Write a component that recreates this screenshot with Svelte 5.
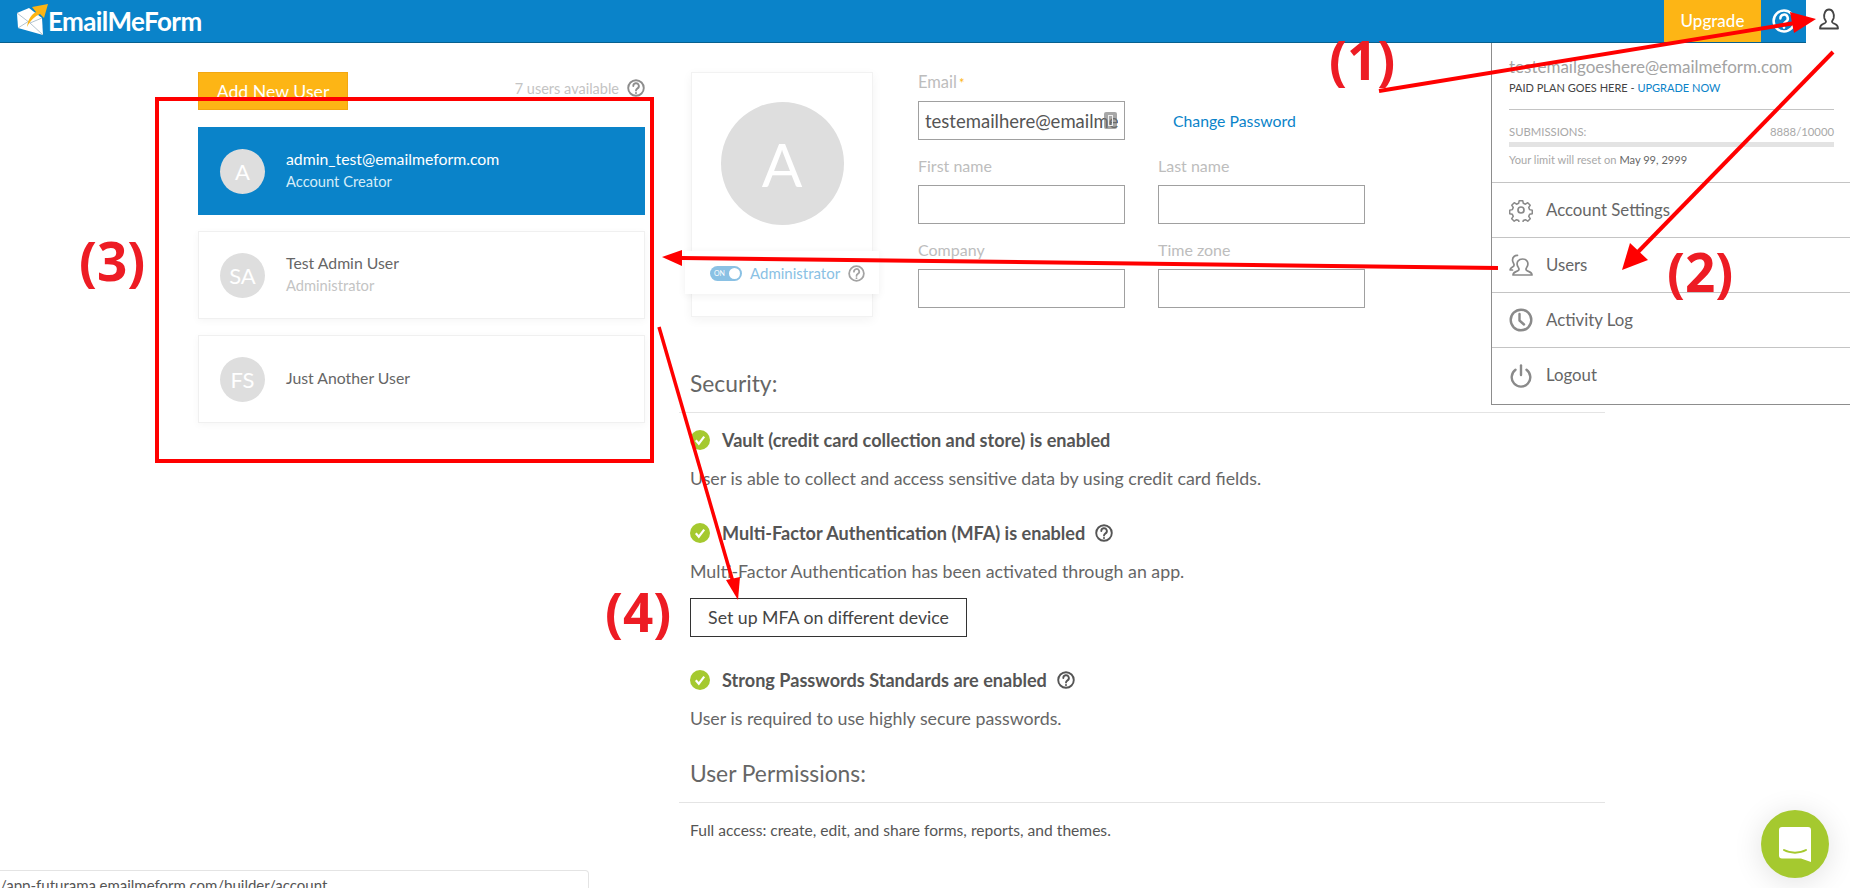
<script lang="ts">
  const users = [
    { initials: 'A', name: 'admin_test@emailmeform.com', role: 'Account Creator', active: true },
    { initials: 'SA', name: 'Test Admin User', role: 'Administrator', active: false },
    { initials: 'FS', name: 'Just Another User', role: '', active: false }
  ];

  const security = [
    { title: 'Vault (credit card collection and store) is enabled', text: 'User is able to collect and access sensitive data by using credit card fields.', help: false, button: false },
    { title: 'Multi-Factor Authentication (MFA) is enabled', text: 'Multi-Factor Authentication has been activated through an app.', help: true, button: true },
    { title: 'Strong Passwords Standards are enabled', text: 'User is required to use highly secure passwords.', help: true, button: false }
  ];

  const menu = ['Account Settings', 'Users', 'Activity Log', 'Logout'];
</script>

{#snippet helpIcon(size: number, color: string)}
  <svg class="help" width={size} height={size} viewBox="0 0 24 24" fill="none" stroke={color} stroke-width="2.500">
    <circle cx="12" cy="12" r="10.400" />
    <path d="M8.400 9.400a3.700 3.700 0 1 1 5.600 3.100c-1.200.8-2 1.400-2 2.900" stroke-linecap="round" />
    <circle cx="12" cy="18.600" r="1.300" fill={color} stroke="none" />
  </svg>
{/snippet}

{#snippet menuIcon(name: string)}
  <svg width="24" height="24" viewBox="0 0 24 24" fill="none" stroke="#8a8a8a" stroke-width="1.700" stroke-linecap="round" stroke-linejoin="round">
    {#if name === 'Account Settings'}
      <circle cx="12" cy="12" r="3" />
      <path d="M10 1.500h4l.6 3 2.400 1 2.600-1.700 2.800 2.800-1.700 2.600 1 2.400 3 .6v4l-3 .6-1 2.400 1.700 2.600-2.800 2.800-2.600-1.700-2.400 1-.6 3h-4l-.6-3-2.400-1-2.600 1.700-2.800-2.800 1.700-2.600-1-2.400-3-.6v-4l3-.6 1-2.400-1.700-2.600 2.800-2.800 2.600 1.700 2.400-1z" transform="translate(1.300 1.300) scale(.89)" />
    {:else if name === 'Users'}
      <path d="M9 16.500c-.3-1.400-1.300-2.200-1.700-3.700-.8-3 1-6.300 5.200-6.300s6 3.300 5.200 6.300c-.4 1.500-1.400 2.300-1.700 3.700-.2 1.200 1.200 1.900 3 2.600 2 .8 3 1.600 3 3.400H3c0-1.800 1-2.600 3-3.400 1.800-.7 3.200-1.400 3-2.600z" transform="translate(1 -.5)" />
      <path d="M8.500 2.400C6 2.200 3.500 4 3.500 7c0 2.200 1.300 3.200 1.600 5 .1 1-1 1.800-2.300 2.500-.9.500-1.500 1.200-1.700 2.500h2.400" />
    {:else if name === 'Activity Log'}
      <circle cx="12" cy="12" r="10.300" stroke-width="2.400" />
      <path d="M10.500 6v6.500l4.500 4" stroke-width="2.400" />
    {:else}
      <path d="M12 1.500V11" stroke-width="2.400" />
      <path d="M6.500 5.800a9.300 9.300 0 1 0 11 0" stroke-width="2.400" />
    {/if}
  </svg>
{/snippet}

<header class="topbar">
  <div class="logo">
    <svg width="34" height="34" viewBox="0 0 34 34">
      <path d="M2 9 14 4l13 10 1 17-25-7z" fill="#fff" />
      <path d="M2 9l13 10 13 12M3 24l11-7M27 14l-12 5" fill="none" stroke="#9fb4c2" stroke-width=".8" />
      <path d="M12 23C13 15 17 10 21 8l-4-5L33 0l-4 14-4-4c-5 2-10 7-13 13z" fill="#fdb515" />
    </svg>
    <span>EmailMeForm</span>
  </div>
  <div class="upgrade">Upgrade</div>
  <div class="top-help">{@render helpIcon(24, '#fff')}</div>
</header>

<button class="user-toggle" aria-label="Account">
  <svg width="20" height="22" viewBox="0 0 20 22" fill="none" stroke="#444" stroke-width="1.800" stroke-linejoin="round">
    <path d="M7 13.500c-.3-1.200-1.300-2-1.700-3.500C4.500 6 6.300 1.500 10 1.500S15.500 6 14.700 10c-.4 1.500-1.400 2.300-1.700 3.500-.2 1.300 1.200 1.800 3 2.500 2 .8 3 1.500 3 4.500H1c0-3 1-3.700 3-4.500 1.800-.7 3.200-1.200 3-2.500z" />
  </svg>
</button>

<main class="page">
  <section class="users">
    <div class="users-head">
      <button class="add-user">Add New User</button>
      <div class="available">7 users available {@render helpIcon(18, '#8d8d8d')}</div>
    </div>
    {#each users as user}
      <div class="user-card" class:active={user.active}>
        <div class="avatar">{user.initials}</div>
        <div class="user-text">
          <div class="user-name">{user.name}</div>
          {#if user.role}<div class="user-role">{user.role}</div>{/if}
        </div>
      </div>
    {/each}
  </section>

  <section class="detail">
    <div class="profile">
      <div class="profile-card">
        <div class="big-avatar">A</div>
        <div class="role-strip">
          <span class="switch"><span class="on">ON</span><span class="knob"></span></span>
          <span class="role-label">Administrator</span>
          {@render helpIcon(17, '#a3a3a3')}
        </div>
      </div>
      <div class="form">
        <div class="field">
          <label class="email-label" for="email">Email<em>*</em></label>
          <div class="email-wrap">
            <input id="email" value="testemailhere@emailmeform.com" readonly />
            <span class="key-icon"><i></i></span>
          </div>
        </div>
        <a class="change-pass" href="#top">Change Password</a>
        <div class="field"><label for="first">First name</label><input id="first" /></div>
        <div class="field"><label for="last">Last name</label><input id="last" /></div>
        <div class="field"><label for="company">Company</label><input id="company" /></div>
        <div class="field"><label for="zone">Time zone</label><input id="zone" /></div>
      </div>
    </div>

    <h2 class="section-title">Security:</h2>
    <div class="rule"></div>
    {#each security as item}
      <div class="sec-item">
        <h3>
          <svg width="20" height="20" viewBox="0 0 20 20">
            <circle cx="10" cy="10" r="10" fill="#a5c92f" />
            <path d="M5.800 10.300l3 3.400 5.400-7" fill="none" stroke="#fff" stroke-width="2.200" />
          </svg>
          <span>{item.title}</span>
          {#if item.help}{@render helpIcon(18, '#555')}{/if}
        </h3>
        <p>{item.text}</p>
        {#if item.button}<button class="mfa">Set up MFA on different device</button>{/if}
      </div>
    {/each}

    <h2 class="section-title perms">User Permissions:</h2>
    <div class="rule"></div>
    <p class="access">Full access: create, edit, and share forms, reports, and themes.</p>
  </section>
</main>

<aside class="account-menu">
  <div class="account-info">
    <div class="account-email">testemailgoeshere@emailmeform.com</div>
    <div class="plan">PAID PLAN GOES HERE - <a href="#top">UPGRADE NOW</a></div>
    <div class="subs"><span>SUBMISSIONS:</span><span>8888/10000</span></div>
    <div class="bar"><div class="bar-fill"></div></div>
    <div class="reset">Your limit will reset on <b>May 99, 2999</b></div>
  </div>
  {#each menu as item}
    <div class="menu-row">{@render menuIcon(item)}<span>{item}</span></div>
  {/each}
</aside>

<div class="url-tip">/app-futurama.emailmeform.com/builder/account</div>

<button class="chat" aria-label="Chat">
  <svg width="32" height="36" viewBox="0 0 32 36">
    <path d="M3 0h26a3 3 0 0 1 3 3v32l-10-3.500H3a3 3 0 0 1-3-3V3a3 3 0 0 1 3-3z" fill="#fff" />
    <path d="M5 23c6 3.500 16 3.500 22 0" fill="none" stroke="#a5c92f" stroke-width="2" stroke-linecap="round" />
  </svg>
</button>

<!-- red annotations drawn on top of the screenshot -->
<svg class="marks" width="1850" height="888" viewBox="0 0 1850 888" fill="none">
  <rect x="157" y="99" width="495" height="362" stroke="#f00" stroke-width="4" />
  <g stroke="#f00" stroke-width="4">
    <path d="M1379 91 1795 23" />
    <path d="M1833 52 1636 254" />
    <path d="M1498 268 682 258" />
  </g>
  <path d="M659 327 733 582" stroke="#f00" stroke-width="3.500" />
  <g fill="#f00">
    <path d="M1816 19 1790 12 1794 33z" />
    <path d="M1622 270 1630 243 1648 260z" />
    <path d="M662 257 682 250 682 266z" />
    <path d="M738 600 726 580 740 577z" />
  </g>
</svg>
<span class="mark-label one">(1)</span>
<span class="mark-label two">(2)</span>
<span class="mark-label three">(3)</span>
<span class="mark-label four">(4)</span>

<style>
  :global(body) {
    margin: 0;
    height: 888px;
    overflow: hidden;
    background: #fff;
    font-family: 'Lato', 'Liberation Sans', sans-serif;
    color: #555;
  }

  button {
    font-family: inherit;
    cursor: pointer;
  }

  .help {
    display: block;
    flex: none;
  }

  .topbar {
    display: flex;
    align-items: stretch;
    width: 1806px;
    height: 42px;
    background: #0a83c9;
    border-bottom: 1px solid #07608f;
  }

  .logo {
    display: flex;
    align-items: center;
    margin-left: 15px;
    color: #fff;
    font-size: 26px;
    font-weight: 700;
    letter-spacing: -0.6px;
    flex: 1;
  }

  .logo svg {
    margin-right: -1px;
    overflow: visible;
  }

  .upgrade {
    width: 97px;
    padding-bottom: 2px;
    box-sizing: border-box;
    background: #fdb515;
    color: #fff;
    font-size: 17px;
    font-weight: 500;
    display: flex;
    align-items: center;
    justify-content: center;
  }

  .top-help {
    width: 45px;
    display: flex;
    align-items: center;
    justify-content: center;
  }

  .user-toggle {
    position: absolute;
    top: 8px;
    left: 1819px;
    padding: 0;
    border: 0;
    background: none;
  }

  .page {
    display: flex;
    padding: 29px 0 0 198px;
    gap: 45px;
  }

  .users {
    width: 447px;
  }

  .users-head {
    display: flex;
    justify-content: space-between;
    align-items: center;
    margin-bottom: 17px;
  }

  .add-user {
    width: 150px;
    height: 38px;
    padding: 0;
    background: #fdb515;
    border: 1px solid #f3a712;
    color: #fff;
    font-size: 17.700px;
  }

  .available {
    display: flex;
    align-items: center;
    gap: 8px;
    color: #c4c4c4;
    font-size: 14.500px;
    margin-top: -6px;
  }

  .user-card {
    display: flex;
    align-items: center;
    gap: 21px;
    height: 88px;
    padding-left: 21px;
    margin-bottom: 16px;
    box-sizing: border-box;
    border: 1px solid #f0f0f0;
    box-shadow: 0 2px 8px rgba(0, 0, 0, 0.04);
  }

  .user-card.active {
    background: #0a83c9;
    border-color: #0a83c9;
    box-shadow: none;
  }

  .avatar {
    width: 45px;
    height: 45px;
    border-radius: 50%;
    background: #dedede;
    color: #fff;
    font-size: 22px;
    display: flex;
    align-items: center;
    justify-content: center;
  }

  .user-text {
    margin-top: -2px;
  }

  .user-name {
    font-size: 15.800px;
    color: #666;
    line-height: 22px;
  }

  .user-role {
    font-size: 14.700px;
    color: #c4c4c4;
    line-height: 22px;
  }

  .active .user-name {
    color: #fff;
  }

  .active .user-role {
    color: #d5ecf8;
  }

  .detail {
    width: 915px;
  }

  .profile {
    display: flex;
    align-items: flex-start;
    margin-left: 1px;
    gap: 45px;
    height: 297px;
  }

  .profile-card {
    width: 182px;
    height: 245px;
    box-sizing: border-box;
    border: 1px solid #f2f2f2;
    box-shadow: 0 3px 10px rgba(0, 0, 0, 0.05);
    padding-top: 29px;
  }

  .big-avatar {
    width: 123px;
    height: 123px;
    margin: 0 auto 26px;
    border-radius: 50%;
    background: #dedede;
    color: #fff;
    font-size: 60px;
    font-weight: 400;
    display: flex;
    align-items: center;
    justify-content: center;
  }

  .role-strip {
    display: flex;
    align-items: center;
    margin: 0 -7px;
    height: 43px;
    padding: 1px 0 0 25px;
    box-sizing: border-box;
    background: #fff;
    box-shadow: 0 2px 8px rgba(0, 0, 0, 0.06);
    position: relative;
    gap: 8px;
  }

  .switch {
    display: flex;
    align-items: center;
    justify-content: space-between;
    width: 32px;
    height: 15px;
    padding: 0 2px 0 4px;
    box-sizing: border-box;
    border-radius: 8px;
    background: #8ac1e4;
  }

  .on {
    font-size: 7px;
    color: #fff;
  }

  .knob {
    width: 11px;
    height: 11px;
    border-radius: 50%;
    background: #fff;
  }

  .role-label {
    font-size: 15px;
    color: #8ac1e4;
  }

  .form {
    display: grid;
    grid-template-columns: 207px 207px;
    column-gap: 33px;
    row-gap: 16px;
  }

  .field {
    display: flex;
    flex-direction: column;
  }

  label {
    height: 29px;
    line-height: 20px;
    font-size: 16px;
    color: #bdbdbd;
  }

  .email-label {
    font-size: 16.500px;
  }

  label em {
    font-style: normal;
    font-size: 13px;
    margin-left: 2px;
    color: #fdb515;
  }

  input {
    width: 207px;
    height: 39px;
    padding: 0 6px;
    box-sizing: border-box;
    border: 1px solid #a0a0a0;
    border-radius: 0;
    outline: none;
    font-family: inherit;
    font-size: 18.500px;
    color: #555;
    background: #fff;
  }

  .email-wrap {
    position: relative;
  }

  .key-icon {
    position: absolute;
    top: 11px;
    right: 8px;
    width: 13px;
    height: 17px;
    border-radius: 2px;
    background: rgba(120, 120, 120, 0.65);
    display: flex;
    align-items: center;
    justify-content: center;
  }

  .key-icon i {
    width: 5px;
    height: 11px;
    border: 1px solid #eee;
    box-sizing: border-box;
  }

  .change-pass {
    align-self: center;
    margin-top: 29px;
    margin-left: 15px;
    font-size: 15.800px;
    color: #0a83c9;
    text-decoration: none;
  }

  .section-title {
    margin: 0;
    font-size: 22.800px;
    font-weight: 400;
    line-height: 28px;
    height: 43px;
    color: #666;
  }

  .rule {
    height: 1px;
    margin-left: -11px;
    background: #e4e4e4;
  }

  h3 {
    display: flex;
    align-items: center;
    gap: 12px;
    height: 24px;
    margin: 15px 0 0;
    font-size: 18.100px;
    font-weight: 700;
    color: #555;
  }

  .sec-item + .sec-item h3 {
    margin-top: 31px;
  }

  h3 .help {
    margin-left: -2px;
  }

  p {
    margin: 14px 0 0;
    font-size: 17.800px;
    line-height: 24px;
    color: #666;
  }

  .mfa {
    display: block;
    width: 277px;
    height: 39px;
    margin: 15px 0 1px;
    padding: 0;
    background: #fff;
    border: 1px solid #333;
    color: #444;
    font-size: 17.700px;
  }

  .section-title.perms {
    margin-top: 29px;
  }

  .access {
    margin: 15px 0 0;
    font-size: 15.600px;
    color: #555;
  }

  .account-menu {
    position: absolute;
    top: 43px;
    left: 1491px;
    width: 359px;
    height: 362px;
    box-sizing: border-box;
    background: #fff;
    border-left: 1px solid #8d8d8d;
    border-bottom: 1px solid #8d8d8d;
  }

  .account-info {
    height: 140px;
    padding: 13px 16px 0 17px;
    box-sizing: border-box;
    border-bottom: 1px solid #c4c4c4;
  }

  .account-email {
    font-size: 17px;
    color: #a3a3a3;
    line-height: 22px;
    white-space: nowrap;
  }

  .plan {
    font-size: 11px;
    color: #444;
    line-height: 20px;
    padding-bottom: 11px;
    border-bottom: 1px solid #c4c4c4;
  }

  .plan a {
    color: #0a83c9;
    text-decoration: none;
  }

  .subs {
    display: flex;
    justify-content: space-between;
    margin-top: 14px;
    font-size: 11.300px;
    color: #a8a8a8;
    line-height: 16px;
  }

  .bar {
    height: 5px;
    margin-top: 2px;
    background: #e3e3e3;
  }

  .reset {
    margin-top: 5px;
    font-size: 11.100px;
    color: #a8a8a8;
    line-height: 16px;
  }

  .reset b {
    font-weight: 400;
    color: #666;
  }

  .menu-row {
    display: flex;
    align-items: center;
    gap: 13px;
    height: 55px;
    padding-left: 17px;
    box-sizing: border-box;
    border-bottom: 1px solid #c4c4c4;
    font-size: 16.800px;
    color: #666;
  }

  .menu-row span {
    margin-top: -2px;
  }

  .menu-row:last-child {
    border-bottom: 0;
  }

  .url-tip {
    position: fixed;
    left: 0;
    top: 870px;
    width: 589px;
    height: 30px;
    box-sizing: border-box;
    border: 1px solid #e4e4e4;
    border-left: 0;
    border-radius: 0 4px 0 0;
    padding: 4px 0 0 0;
    font-size: 15px;
    line-height: 20px;
    color: #555;
    background: #fff;
  }

  .chat {
    position: fixed;
    left: 1761px;
    top: 810px;
    width: 68px;
    height: 68px;
    padding: 2px 0 0;
    border: 0;
    border-radius: 50%;
    background: #a5c92f;
    box-shadow: 0 4px 30px rgba(0, 0, 0, 0.12);
    display: flex;
    align-items: center;
    justify-content: center;
  }

  .marks {
    position: fixed;
    top: 0;
    left: 0;
    pointer-events: none;
  }

  .mark-label {
    position: fixed;
    font-family: 'Open Sans', sans-serif;
    font-weight: 700;
    font-size: 53px;
    line-height: 60px;
    color: #ed1c24;
    pointer-events: none;
  }

  .one { left: 1329px; top: 30px; }
  .two { left: 1667px; top: 242px; }
  .three { left: 79px; top: 231px; }
  .four { left: 605px; top: 582px; }
</style>
